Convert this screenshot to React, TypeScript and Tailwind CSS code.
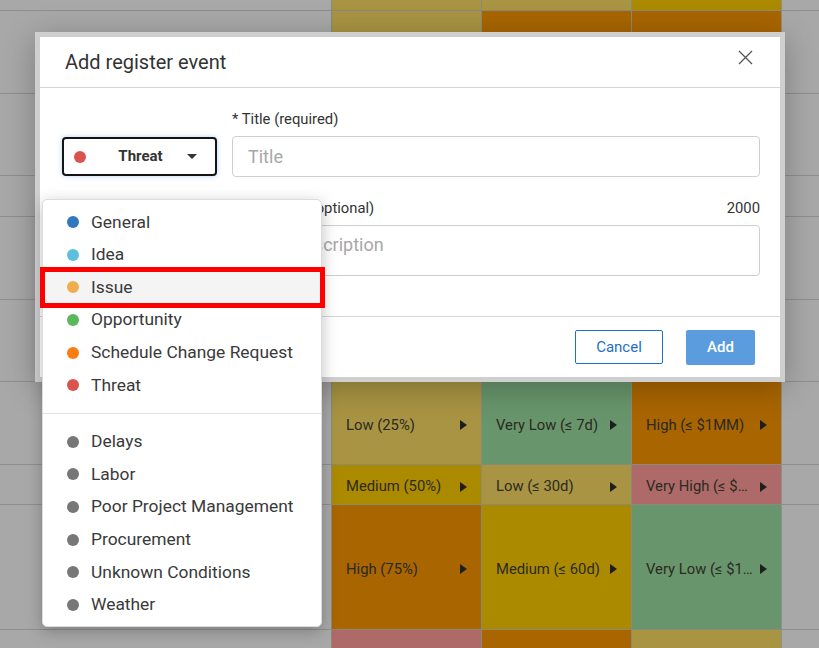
import React from "react";

type Cell = { c: string; t?: string };

const TAN = "bg-[#a89443]";
const YEL = "bg-[#ab8a00]";
const ORA = "bg-[#a96500]";
const GRN = "bg-[#68956b]";
const PNK = "bg-[#ad6a68]";

const rows: { h: string; cells: Cell[] }[] = [
  { h: "h-[11px]", cells: [{ c: TAN }, { c: TAN }, { c: YEL }] },
  { h: "h-[83px]", cells: [{ c: TAN }, { c: ORA }, { c: ORA }] },
  { h: "h-[82px]", cells: [{ c: PNK }, { c: YEL }, { c: TAN }] },
  { h: "h-[41px]", cells: [{ c: YEL }, { c: TAN }, { c: GRN }] },
  { h: "h-[83px]", cells: [{ c: ORA }, { c: GRN }, { c: TAN }] },
  { h: "h-[82px]", cells: [{ c: TAN }, { c: PNK }, { c: YEL }] },
  {
    h: "h-[83px]",
    cells: [
      { c: TAN, t: "Low (25%)" },
      { c: GRN, t: "Very Low (≤ 7d)" },
      { c: ORA, t: "High (≤ $1MM)" },
    ],
  },
  {
    h: "h-[40px]",
    cells: [
      { c: YEL, t: "Medium (50%)" },
      { c: TAN, t: "Low (≤ 30d)" },
      { c: PNK, t: "Very High (≤ $100MM)" },
    ],
  },
  {
    h: "h-[125px]",
    cells: [
      { c: ORA, t: "High (75%)" },
      { c: YEL, t: "Medium (≤ 60d)" },
      { c: GRN, t: "Very Low (≤ $100K)" },
    ],
  },
  { h: "h-[20px]", cells: [{ c: PNK }, { c: ORA }, { c: TAN }] },
];

const Caret = () => (
  <svg width="7" height="10" viewBox="0 0 7 10" className="shrink-0">
    <path d="M0 0 L7 5 L0 10 Z" fill="#1e1e1e" />
  </svg>
);

const main = [
  { label: "General", color: "bg-[#2f78bd]" },
  { label: "Idea", color: "bg-[#5bc0de]" },
  { label: "Issue", color: "bg-[#f0ad4e]", active: true },
  { label: "Opportunity", color: "bg-[#5cb85c]" },
  { label: "Schedule Change Request", color: "bg-[#fd7c10]" },
  { label: "Threat", color: "bg-[#d9534f]" },
];
const cats = ["Delays", "Labor", "Poor Project Management", "Procurement", "Unknown Conditions", "Weather"];

function Item({ label, color, active }: { label: string; color: string; active?: boolean }) {
  return (
    <div className={`flex items-center h-[32.6px] pl-[24px] ${active ? "bg-[#f4f4f4]" : ""}`}>
      <span className={`w-[12px] h-[12px] rounded-full ${color}`} />
      <span className="ml-[12px] text-[17.4px] text-[#3a3a3a] leading-none">{label}</span>
    </div>
  );
}

export default function App() {
  return (
    <div className="relative w-[819px] h-[648px] overflow-hidden bg-[#a8a8a8] font-['Roboto',sans-serif]">
      {/* background table */}
      <div className="flex flex-col">
        {rows.map((r, i) => (
          <div key={i} className={`flex ${r.h} shrink-0`}>
            <div className="w-[331px] border-b border-[#8e8e8e]" />
            {r.cells.map((c, j) => (
              <div
                key={j}
                className={`w-[150px] ${c.c} border-l border-b border-[#8a8a7a] flex items-center pl-[14px] pr-[14px] pt-[4px] gap-[7px]`}
              >
                {c.t && (
                  <>
                    <span className="flex-1 truncate text-[14.8px] text-[#2b2a22]">{c.t}</span>
                    <Caret />
                  </>
                )}
              </div>
            ))}
            <div className="flex-1 border-l border-b border-[#8e8e8e]" />
          </div>
        ))}
      </div>

      {/* modal */}
      <div className="absolute left-[35px] top-[32px] w-[750px] h-[350px] border-[5px] border-[#cfcfcf] bg-white shadow-[0_6px_30px_rgba(0,0,0,0.25)] flex flex-col">
        <div className="h-[51px] shrink-0 border-b border-[#d6d6d6] flex items-center justify-between pl-[25px] pr-[27px]">
          <span className="text-[20px] text-[#333]">Add register event</span>
          <svg width="15" height="15" viewBox="0 0 15 15" className="mb-[10px]">
            <path d="M1 1 L14 14 M14 1 L1 14" stroke="#555" strokeWidth="1.3" />
          </svg>
        </div>
        <div className="flex-1 flex pl-[22px] pr-[20px] pt-[21px]">
          <div className="w-[155px] shrink-0 pt-[28px]">
            <div className="h-[39px] border-2 border-[#141414] rounded-[4px] shadow-[0_0_5px_rgba(90,150,230,0.45)] flex items-center pl-[10px] pr-[18px]">
              <span className="w-[12px] h-[12px] rounded-full bg-[#d9534f]" />
              <span className="flex-1 text-center text-[15px] font-bold text-[#333] pl-[8px]">Threat</span>
              <svg width="10" height="5" viewBox="0 0 10 5">
                <path d="M0 0 L10 0 L5 5 Z" fill="#333" />
              </svg>
            </div>
          </div>
          <div className="flex-1 ml-[15px] flex flex-col">
            <div className="text-[14.8px] leading-[18px] text-[#333] pt-[1px]">* Title (required)</div>
            <div className="mt-[8px] h-[41px] border border-[#cfcfcf] rounded-[4px] flex items-center px-[15px] text-[18px] text-[#a8a8a8]">
              Title
            </div>
            <div className="mt-[22px] flex justify-between text-[14.8px] leading-[18px] text-[#333]">
              <span>Description (optional)</span>
              <span>2000</span>
            </div>
            <div className="mt-[8px] h-[51px] border border-[#cfcfcf] rounded-[4px] px-[15px] pt-[8px] text-[18px] leading-[22px] text-[#a8a8a8]">
              Enter description
            </div>
          </div>
        </div>
        <div className="h-[61px] shrink-0 border-t border-[#d6d6d6] flex items-center justify-end pr-[25px] gap-[23px]">
          <button className="w-[88px] h-[34px] border border-[#1e6fc8] rounded-[2px] text-[15px] text-[#1e6fc8] bg-white">
            Cancel
          </button>
          <button className="w-[69px] h-[35px] rounded-[2px] text-[15px] font-medium text-white bg-[#5b9cde]">
            Add
          </button>
        </div>
      </div>

      {/* dropdown */}
      <div className="absolute left-[42px] top-[199px] w-[280px] h-[428px] bg-white rounded-[5px] border border-[#dcdcdc] shadow-[0_4px_16px_rgba(0,0,0,0.25)] py-[6px]">
        {main.map((m) => (
          <Item key={m.label} {...m} />
        ))}
        <div className="my-[11.5px] border-t border-[#e2e2e2]" />
        {cats.map((c) => (
          <Item key={c} label={c} color="bg-[#777]" />
        ))}
      </div>

      {/* annotation */}
      <div className="absolute left-[40px] top-[267px] w-[285px] h-[41px] border-[5px] border-[#ff0000]" />
    </div>
  );
}
